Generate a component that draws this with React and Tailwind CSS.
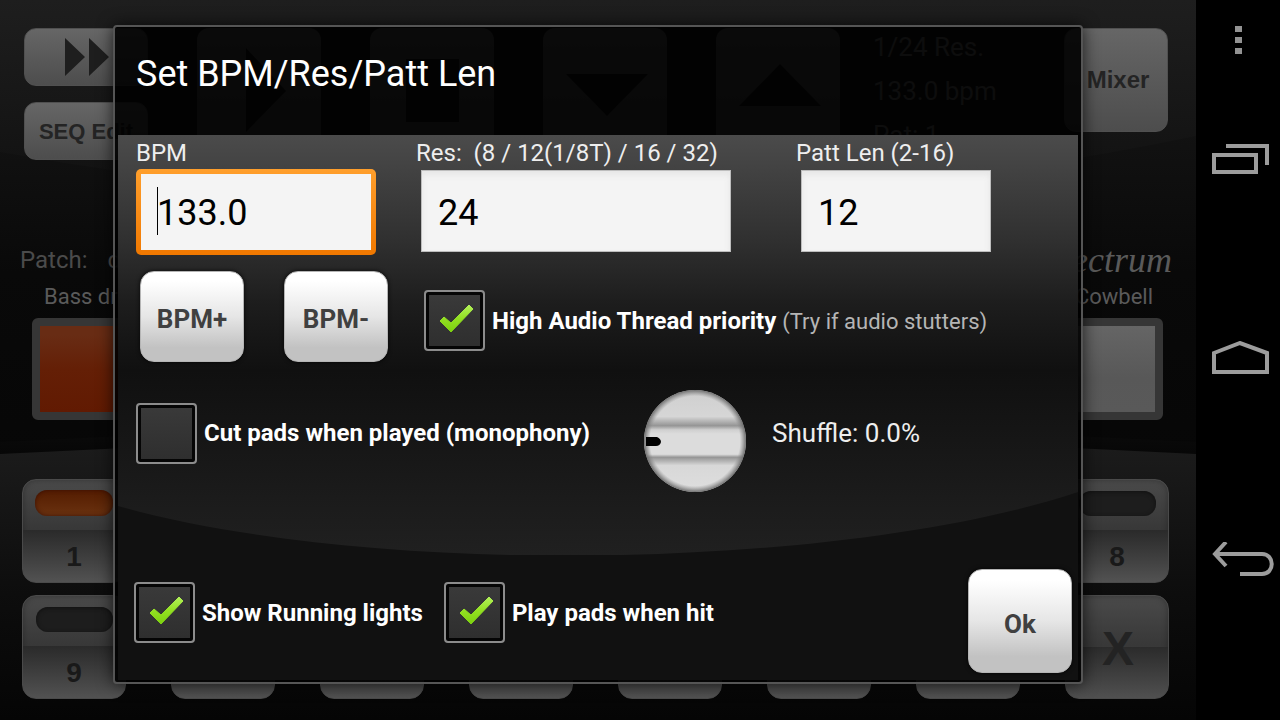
import React, { useState } from "react";

// only the edge pads carry a label
const PADS = [
  { label: "1", lit: true }, {}, {}, {}, {}, {}, {}, { label: "8" },
  { label: "9" }, {}, {}, {}, {}, {}, {}, { label: "X", big: true },
];

const TRANSPORT = [
  { name: "Play", points: "49,20 89,63 49,104" },
  { name: "Stop", points: "36,31 89,31 89,94 36,94" },
  { name: "Down", points: "23,46 105,46 64,88" },
  { name: "Up", points: "23,78 105,78 64,36" },
];

function Pad({ label, lit, big }) {
  return (
    <button className="flex h-[104px] w-[104px] flex-col items-center rounded-[14px] border border-[#4a4a4a] bg-linear-to-b from-[#4a4a4a] via-[#383838] via-48% to-[#505050] font-['Liberation_Sans',sans-serif] font-bold text-[#191919] shadow-[inset_0_0_6px_rgba(0,0,0,0.3)]">
      {big ? (
        <span className="flex h-full w-full items-center justify-center rounded-[13px] bg-linear-to-b from-transparent from-50% via-[#2b2b2b] via-50% to-[#505050] pt-1 pl-0.5 text-5xl text-[#232323]">{label}</span>
      ) : (
        <>
          <span className="flex h-[50px] w-full shrink-0 items-center justify-center pb-1">
            <span className={lit
              ? "h-[26px] w-[78px] rounded-[12px] bg-linear-to-b from-[#541c02] to-[#6a3210] shadow-[inset_0_0_4px_rgba(50,10,0,0.8)]"
              : "h-[25px] w-[77px] rounded-[12px] bg-[#1d1d1d] shadow-[inset_0_1px_4px_#111111]"} />
          </span>
          <span className="flex w-full grow items-center justify-center rounded-b-[13px] bg-linear-to-b from-[#2a2a2a] to-[#525252] pt-0.5 text-[28px]">{label}</span>
        </>
      )}
    </button>
  );
}

function Machine() {
  return (
    <div className="relative min-h-screen overflow-hidden bg-linear-to-b from-[#1b1b1b] via-[#090909] via-38% to-[#040404] pb-5">
      {/* curved panel shading */}
      <svg className="absolute inset-0 h-full w-full" viewBox="0 0 1196 720" preserveAspectRatio="none" aria-hidden="true">
        <defs>
          <linearGradient id="lower" x1="0" y1="0" x2="0" y2="1">
            <stop offset="0" stopColor="#1c1c1c" />
            <stop offset="0.55" stopColor="#0d0d0d" />
            <stop offset="1" stopColor="#050505" />
          </linearGradient>
          <linearGradient id="upper" x1="0" y1="0" x2="0" y2="1">
            <stop offset="0" stopColor="#1e1e1e" />
            <stop offset="1" stopColor="#101010" />
          </linearGradient>
          <linearGradient id="groove" x1="0" y1="0" x2="0" y2="1">
            <stop offset="0" stopColor="#0b0b0b" />
            <stop offset="1" stopColor="#060606" />
          </linearGradient>
        </defs>
        <path d="M0 0H1196V136Q598 260 0 152Z" fill="url(#upper)" />
        <path d="M0 442Q598 410 1196 442V460H0Z" fill="url(#groove)" />
        <path d="M0 454Q598 422 1196 454V720H0Z" fill="url(#lower)" />
      </svg>

      <div className="relative">
        <div className="flex items-start gap-[49px] pt-7 pl-6 pr-7">
          <div className="flex w-[124px] flex-col gap-4">
            <button aria-label="Fast forward" className="flex h-[58px] items-center justify-center rounded-xl border border-[#505050] bg-linear-to-b from-[#666666] to-[#4d4d4d] pl-0.5">
              <svg width="44" height="38" viewBox="0 0 44 38" fill="#1e1e1e">
                <path d="M0 0L20 19L0 38ZM24 0L44 19L24 38Z" />
              </svg>
            </button>
            <button className="h-[58px] rounded-xl border border-[#505050] bg-linear-to-b from-[#666666] to-[#4d4d4d] font-['Liberation_Sans',sans-serif] text-[22px] font-bold text-[#242424]">SEQ Edit</button>
          </div>
          {TRANSPORT.map((t) => (
            <button key={t.name} aria-label={t.name} className="h-[132px] w-[124px] rounded-xl bg-linear-to-b from-[#666666] to-[#4d4d4d]">
              <svg width="124" height="132" viewBox="0 0 124 132" fill="#1c1c1c">
                <polygon points={t.points} />
              </svg>
            </button>
          ))}
          <div className="-ml-4 h-[107px] overflow-hidden text-[26px] leading-[44px] whitespace-nowrap text-[#808080]">
            <p className="-mt-[3px]">1/24 Res.</p>
            <p>133.0 bpm</p>
            <p>Pat: 1</p>
          </div>
          <button className="ml-auto h-[104px] w-[104px] rounded-xl border border-[#505050] bg-linear-to-b from-[#666666] to-[#4d4d4d] pl-1 font-['Liberation_Sans',sans-serif] text-2xl font-bold text-[#242424]">Mixer</button>
        </div>

        <div className="mt-20 flex h-10 items-center justify-between pr-6 pl-5 text-[#4b4b4b]">
          <p className="text-2xl">Patch:<span className="ml-5">default</span></p>
          <p className="font-['Liberation_Serif',serif] text-4xl italic text-[#5a5a5a]">Spectrum</p>
        </div>

        <div className="flex justify-between pr-[33px] pl-8 text-[#5a5a5a]">
          <div className="w-[104px]">
            <p className="pl-3 text-[22px] leading-[34px] whitespace-nowrap">Bass drum</p>
            <button aria-label="Bass drum pad" className="mt-1 block h-[102px] w-full rounded-md border-8 border-[#363636] bg-linear-to-b from-[#682c14] from-10% via-[#641f06] via-50% to-[#611a02]" />
          </div>
          <div className="w-[104px]">
            <p className="pr-2.5 text-right text-[22px] leading-[34px]">Cowbell</p>
            <button aria-label="Cowbell pad" className="mt-1 block h-[102px] w-full rounded-md border-8 border-[#363636] bg-linear-to-b from-[#656565] via-[#585858] via-60% to-[#595959]" />
          </div>
        </div>

        <div className="mt-[59px] grid grid-cols-[repeat(8,104px)] justify-between gap-y-3 pr-[27px] pl-[22px]">
          {PADS.map((pad, i) => <Pad key={i} {...pad} />)}
        </div>
      </div>
    </div>
  );
}

function CheckBox({ id, checked, onChange, children }) {
  return (
    <div className="flex items-center gap-[7px]">
      <span className="relative block size-[61px] shrink-0">
        <input
          id={id}
          type="checkbox"
          checked={checked}
          onChange={(e) => onChange(e.target.checked)}
          className="block size-full appearance-none rounded-[4px] border-2 border-[#8c8c8c] bg-linear-to-b from-[#3a3a3a] to-[#2e2e2e] shadow-[inset_0_0_0_3px_#050505]"
        />
        {checked && (
          <svg className="pointer-events-none absolute inset-0" width="61" height="61" viewBox="0 0 61 61">
            <defs>
              <linearGradient id={id + "-tick"} x1="0" y1="0" x2="0" y2="1">
                <stop offset="0" stopColor="#b2f15a" />
                <stop offset="0.5" stopColor="#93e022" />
                <stop offset="1" stopColor="#7cd010" />
              </linearGradient>
            </defs>
            <path d="M16 31L20 27L27 33L45 15L49 19L27 42Z" fill={`url(#${id}-tick)`} stroke={`url(#${id}-tick)`} strokeLinejoin="round" />
          </svg>
        )}
      </span>
      <label htmlFor={id} className="text-2xl font-bold whitespace-nowrap text-white">{children}</label>
    </div>
  );
}

function PushButton({ className, ...props }) {
  return (
    <button
      className={"w-[104px] rounded-[14px] border border-[#b5b5b5] bg-linear-to-b from-white from-10% via-[#e6e6e6] via-50% to-[#c2c2c2] to-85% pt-1.5 text-[26px] font-bold text-[#404040] shadow-[0_0_4px_rgba(0,0,0,0.8)] " + className}
      {...props}
    />
  );
}

function Knob({ value, onChange }) {
  return (
    <span className="relative block size-[104px] shrink-0">
      <svg width="104" height="104" viewBox="0 0 104 104" aria-hidden="true">
        <defs>
          <linearGradient id="knob" x1="0" y1="0" x2="0" y2="1">
            <stop offset="0" stopColor="#cfcfcf" />
            <stop offset="0.26" stopColor="#d6d6d6" />
            <stop offset="0.35" stopColor="#959595" />
            <stop offset="0.39" stopColor="#cfcfcf" />
            <stop offset="0.43" stopColor="#dcdcdc" />
            <stop offset="0.63" stopColor="#dcdcdc" />
            <stop offset="0.66" stopColor="#959595" />
            <stop offset="0.74" stopColor="#d8d8d8" />
            <stop offset="1" stopColor="#dedede" />
          </linearGradient>
          <radialGradient id="rim">
            <stop offset="0.88" stopColor="#888888" stopOpacity="0" />
            <stop offset="1" stopColor="#707070" />
          </radialGradient>
        </defs>
        <circle cx="52" cy="52" r="51" fill="url(#knob)" />
        <circle cx="52" cy="52" r="51" fill="url(#rim)" />
        <path d="M3 48H14Q18 50 18 53Q17 57 13 57H3Z" fill="#000000" />
      </svg>
      <input id="shuffle" type="range" min="0" max="100" value={value} onChange={(e) => onChange(Number(e.target.value))} className="absolute inset-0 size-full opacity-0" />
    </span>
  );
}

function SettingsDialog() {
  const [bpm, setBpm] = useState("133.0");
  const [res, setRes] = useState("24");
  const [pattLen, setPattLen] = useState("12");
  const [highPriority, setHighPriority] = useState(true);
  const [cutPads, setCutPads] = useState(false);
  const [runningLights, setRunningLights] = useState(true);
  const [playPads, setPlayPads] = useState(true);
  const [shuffle, setShuffle] = useState(0);

  const changeBpm = (step) => setBpm((Number(bpm) + step).toFixed(1));

  return (
    <div role="dialog" aria-labelledby="dialog-title" className="absolute inset-x-[113px] top-[25px] rounded-[4px] border-2 border-[#555555] bg-black/90 px-[3px] pb-0.5 shadow-[0_0_16px_rgba(0,0,0,0.7)]">
      <h1 id="dialog-title" className="flex h-[108px] items-center pb-3.5 pl-[18px] text-4xl text-white">Set BPM/Res/Patt Len</h1>

      <div className="relative overflow-hidden bg-[#111111] pb-[7px] text-[#eeeeee]">
        <svg className="absolute inset-x-0 top-0 h-[420px] w-full" viewBox="0 0 961 420" preserveAspectRatio="none" aria-hidden="true">
          <defs>
            <linearGradient id="gloss" x1="0" y1="0" x2="0" y2="1">
              <stop offset="0" stopColor="#4b4b4b" />
              <stop offset="0.25" stopColor="#303030" />
              <stop offset="0.4" stopColor="#1d1d1d" />
              <stop offset="0.56" stopColor="#101010" />
              <stop offset="1" stopColor="#202020" />
            </linearGradient>
          </defs>
          <path d="M0 0H961V357C730 434 260 444 0 371Z" fill="url(#gloss)" />
        </svg>

        <div className="relative pl-[18px]">
          <div className="flex items-start">
            <div className="mr-10 w-60">
              <label htmlFor="bpm" className="block h-[34px] text-2xl leading-9">BPM</label>
              <div className="relative">
                <input id="bpm" value={bpm} onChange={(e) => setBpm(e.target.value)} className="block h-[86px] w-full rounded-[5px] border-[5px] border-transparent pt-0.5 pl-4 text-4xl text-black caret-transparent outline-none [background:linear-gradient(#f4f4f4,#f4f4f4)_padding-box,linear-gradient(#ff9f2c,#f07800)_border-box]" />
                <span className="absolute top-[18px] left-[21px] h-12 w-px bg-black" />
              </div>
            </div>
            <div className="mr-[60px] w-80">
              <label htmlFor="res" className="block h-[35px] text-2xl leading-9 whitespace-pre">Res:  (8 / 12(1/8T) / 16 / 32)</label>
              <input id="res" value={res} onChange={(e) => setRes(e.target.value)} className="ml-[5px] block h-[82px] w-[310px] border border-[#bdbdbd] bg-[#f4f4f4] pt-1 pl-4 text-4xl text-black shadow-[inset_0_4px_6px_#e6e6e6]" />
            </div>
            <div className="w-[200px]">
              <label htmlFor="patt-len" className="block h-[35px] text-2xl leading-9">Patt Len (2-16)</label>
              <input id="patt-len" value={pattLen} onChange={(e) => setPattLen(e.target.value)} className="ml-[5px] block h-[82px] w-[190px] border border-[#bdbdbd] bg-[#f4f4f4] pt-1 pl-4 text-4xl text-black shadow-[inset_0_4px_6px_#e6e6e6]" />
            </div>
          </div>

          <div className="mt-4 flex items-center pl-1">
            <PushButton className="mr-10 h-[91px]" onClick={() => changeBpm(1)}>BPM+</PushButton>
            <PushButton className="mr-9 h-[91px]" onClick={() => changeBpm(-1)}>BPM-</PushButton>
            <div className="pt-2">
              <CheckBox id="priority" checked={highPriority} onChange={setHighPriority}>
                High Audio Thread priority <span className="text-[22px] font-normal text-[#b5b5b5]">(Try if audio stutters)</span>
              </CheckBox>
            </div>
          </div>

          <div className="mt-[27px] flex items-center">
            <div className="-mt-4 w-[507px]">
              <CheckBox id="cut" checked={cutPads} onChange={setCutPads}>Cut pads when played (monophony)</CheckBox>
            </div>
            <Knob value={shuffle} onChange={setShuffle} />
            <label htmlFor="shuffle" className="-mt-4 ml-[25px] text-[26px]">Shuffle: {shuffle.toFixed(1)}%</label>
          </div>
        </div>

        <div className="relative mt-[76px] flex items-start pr-1.5 pl-4">
          <div className="mt-[13px] flex gap-[21px]">
            <CheckBox id="lights" checked={runningLights} onChange={setRunningLights}>Show Running lights</CheckBox>
            <CheckBox id="play-pads" checked={playPads} onChange={setPlayPads}>Play pads when hit</CheckBox>
          </div>
          <PushButton className="ml-auto h-[104px]">Ok</PushButton>
        </div>
      </div>
    </div>
  );
}

function NavBar() {
  return (
    <nav className="flex w-[84px] shrink-0 flex-col bg-black">
      <button aria-label="Menu" className="flex h-20 items-center justify-center">
        <svg width="7" height="28" viewBox="0 0 7 28" fill="#939393">
          <path d="M0 0H7V6H0ZM0 11H7V17H0ZM0 22H7V28H0Z" />
        </svg>
      </button>
      <button aria-label="Recent apps" className="flex h-[158px] items-center justify-center pl-1">
        <svg width="57" height="30" viewBox="0 0 57 30" fill="none" stroke="#9c9c9c" strokeWidth="4">
          <path d="M2 11H44V28H2ZM14 2H55V21" />
        </svg>
      </button>
      <button aria-label="Home" className="flex h-60 items-center justify-center pl-1">
        <svg width="57" height="34" viewBox="0 0 57 34" fill="none" stroke="#9c9c9c" strokeWidth="4">
          <path d="M2 12L28 2L55 12V31H2Z" />
        </svg>
      </button>
      <button aria-label="Back" className="flex h-[162px] items-center justify-center pl-2.5">
        <svg width="62" height="35" viewBox="0 0 62 35" fill="none" stroke="#9c9c9c" strokeWidth="4">
          <path d="M3 12H50C63 12 63 32 50 32H28" />
          <path d="M14 0L3 12L14 24" />
        </svg>
      </button>
    </nav>
  );
}

export default function App() {
  return (
    <div className="flex min-h-screen bg-black font-[Roboto,sans-serif]">
      <main className="relative min-w-0 grow">
        <Machine />
        <SettingsDialog />
      </main>
      <NavBar />
    </div>
  );
}
